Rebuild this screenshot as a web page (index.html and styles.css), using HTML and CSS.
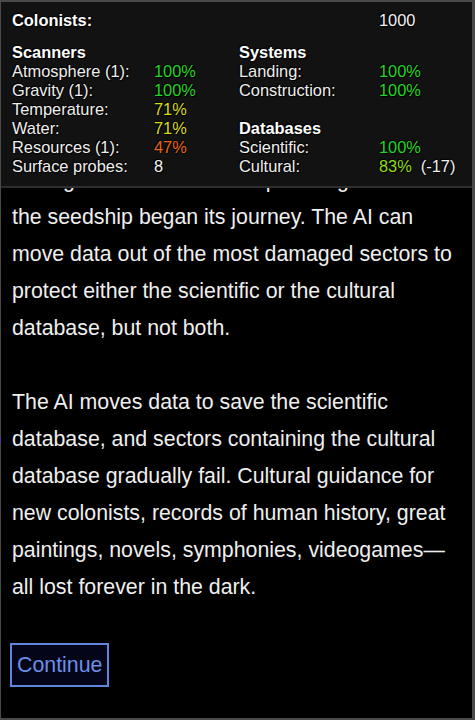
FILE: index.html
```html
<!DOCTYPE html>
<html>
<head>
<meta charset="utf-8">
<link rel="stylesheet" href="styles.css">
</head>
<body>
<div class="frame">
  <div class="status">
    <div class="grid">
      <div class="head">Colonists:</div><div></div><div></div><div class="num">1000</div>

      <div class="head sec">Scanners</div><div class="sec"></div><div class="head sec">Systems</div><div class="sec"></div>

      <div>Atmosphere (1):</div><div class="g">100%</div><div>Landing:</div><div class="g">100%</div>
      <div>Gravity (1):</div><div class="g">100%</div><div>Construction:</div><div class="g">100%</div>
      <div>Temperature:</div><div class="y">71%</div><div></div><div></div>
      <div>Water:</div><div class="y">71%</div><div class="head">Databases</div><div></div>
      <div>Resources (1):</div><div class="o">47%</div><div>Scientific:</div><div class="g">100%</div>
      <div>Surface probes:</div><div class="num">8</div><div>Cultural:</div><div><span class="yg">83%</span><span class="delta">(-17)</span></div>
    </div>
  </div>
  <div class="story">
    <p>Storage faults have been spreading since<br>the seedship began its journey. The AI can move data out of the most damaged sectors to protect either the scientific or the cultural database, but not both.</p>
    <p>The AI moves data to save the scientific database, and sectors containing the cultural database gradually fail. Cultural guidance for new colonists, records of human history, great paintings, novels, symphonies, videogames&mdash;all lost forever in the dark.</p>
    <button class="continue">Continue</button>
  </div>
</div>
</body>
</html>
```

FILE: styles.css
```css
html, body {
  margin: 0;
  padding: 0;
  background: #000;
}
body {
  font-family: "Liberation Sans", Arial, sans-serif;
  color: #eee;
}
.frame {
  position: relative;
  box-sizing: border-box;
  width: 475px;
  height: 720px;
  overflow: hidden;
  border-style: solid;
  border-color: #4a4a4a;
  border-width: 2px 3px 2px 1px;
  background: #000;
}
.status {
  position: absolute;
  top: 0;
  left: 0;
  right: 0;
  z-index: 2;
  box-sizing: border-box;
  height: 186px;
  background: #121212;
  border-bottom: 2px solid #2e2e2e;
  padding: 9px 0 0 11px;
  font-size: 16.4px;
  line-height: 19px;
  color: #eee;
  text-shadow: 1px 1px 1px #000, -1px -1px 1px #000;
}
.grid {
  display: grid;
  grid-template-columns: 142px 85px 140px 1fr;
}
.head {
  font-weight: bold;
  color: #fff;
}
.sec {
  margin-top: 13px;
}
.num { color: #f2f2f2; }
.g { color: #22d622; }
.y { color: #d8dc10; }
.yg { color: #8fdc10; }
.o { color: #e8660e; }
.delta {
  margin-left: 9px;
  color: #eee;
}
.story {
  padding: 160px 12px 0 11px;
  font-size: 21.33px;
  line-height: 37px;
  color: #efefef;
}
.story p {
  margin: 0 0 37px;
}
.continue {
  display: block;
  margin: 0 0 0 -2px;
  padding: 8px 5px;
  font-family: "Liberation Sans", Arial, sans-serif;
  font-size: 21.33px;
  line-height: 24px;
  color: #6a90e8;
  background: #05051a;
  border: 2px solid #5f86dc;
  border-radius: 0;
}
```
